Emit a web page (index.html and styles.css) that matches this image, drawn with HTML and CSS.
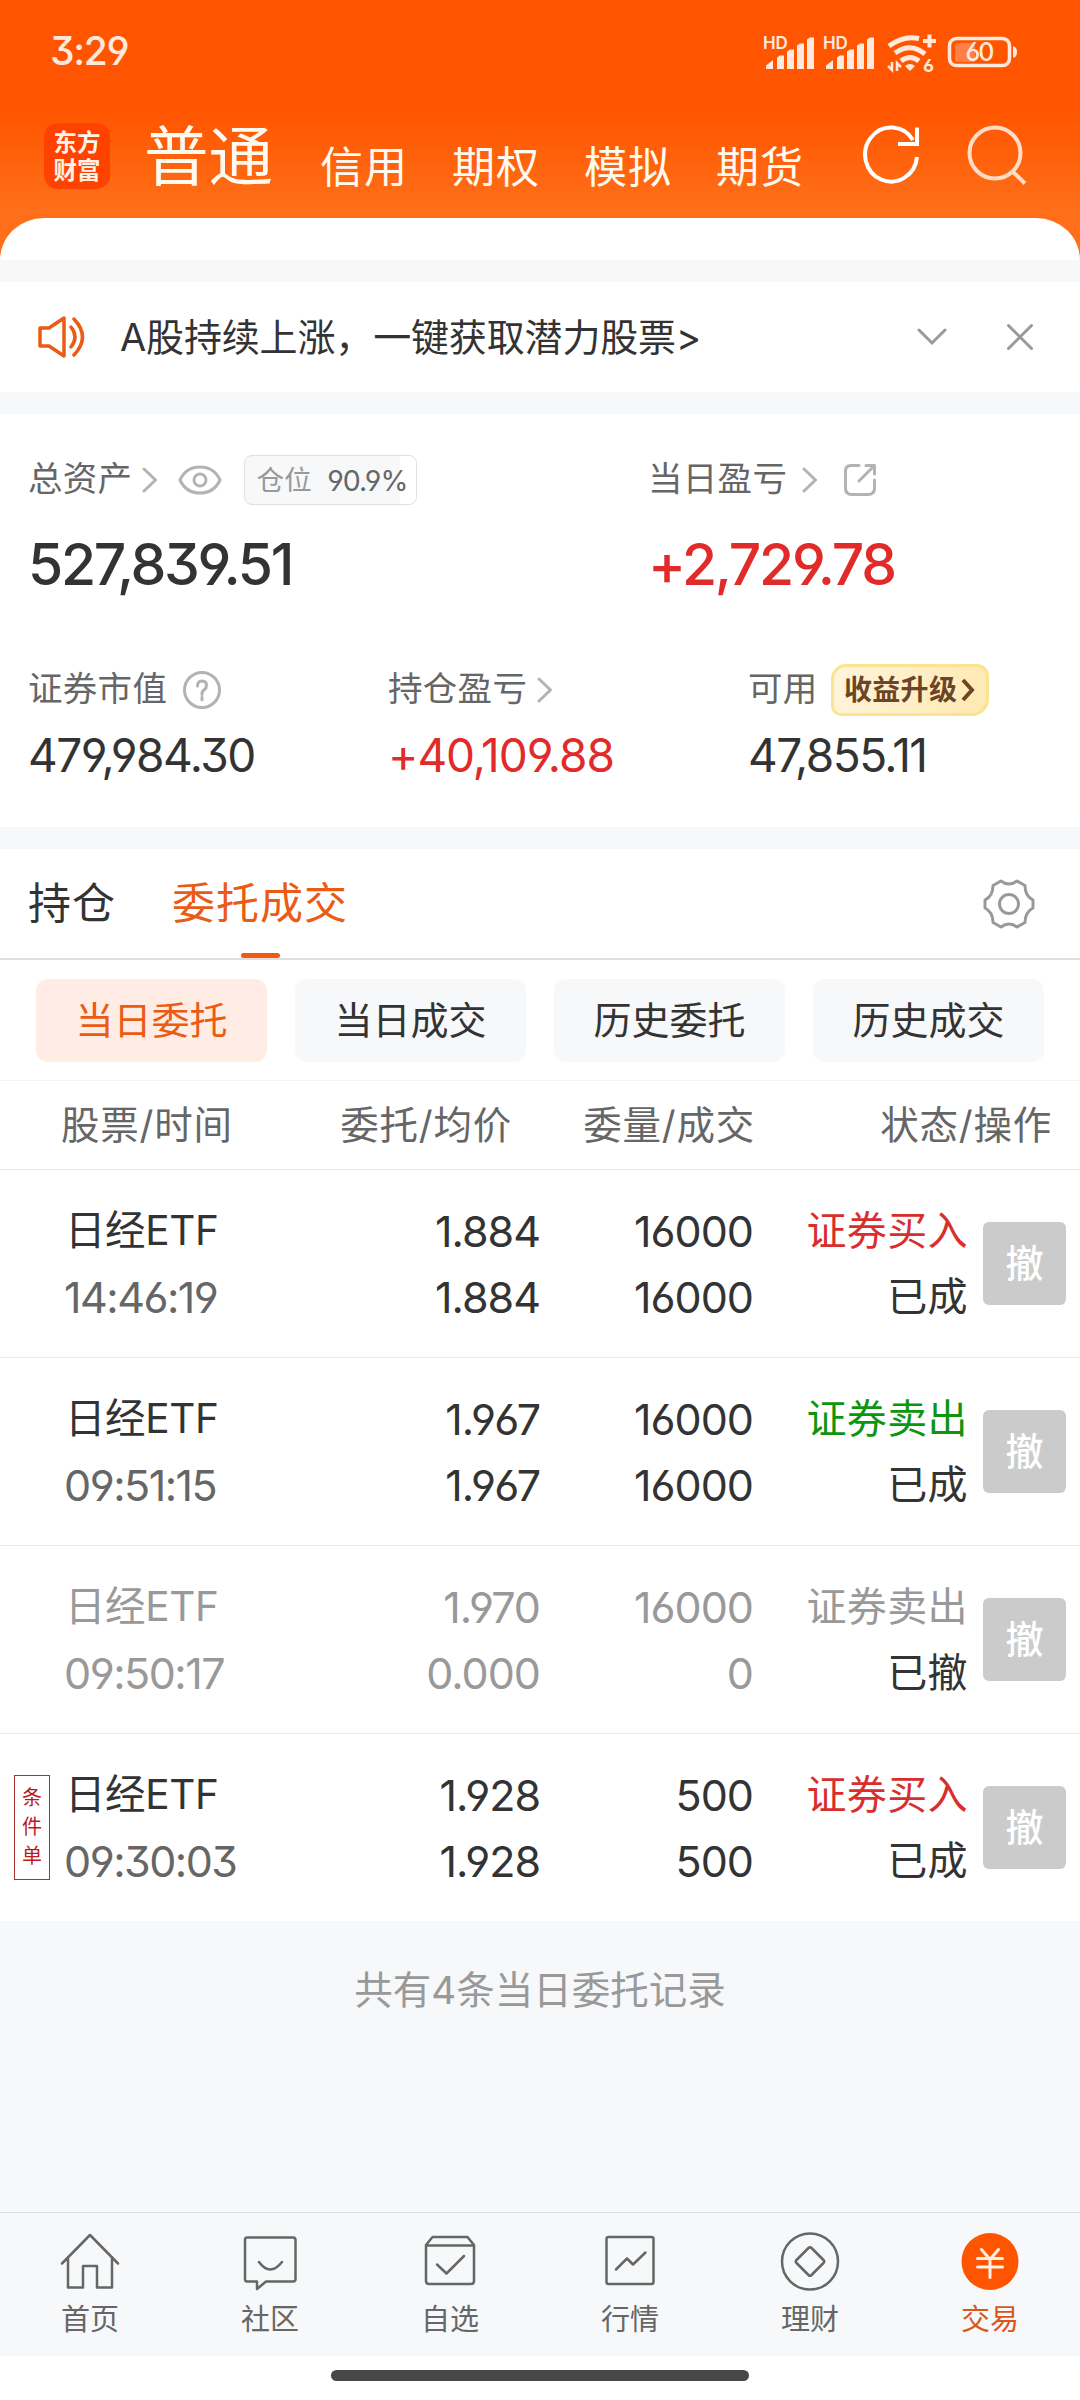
FILE: index.html
```html
<!DOCTYPE html>
<html lang="zh-CN">
<head>
<meta charset="utf-8">
<title>东方财富 交易</title>
<link rel="stylesheet" href="styles.css">
</head>
<body>
<header class="top">
  <div class="status">
    <span class="clock">3:29</span>
    <svg class="status-icons" width="256" height="44" viewBox="762 30 256 44" fill="#ffe9dc">
      <g id="sim">
        <text x="763" y="48.500" class="hd">HD</text>
        <path d="M766 69v-3.500l6.500-5h.5v8.500zM777 69v-11.500l3-2h4v13.500zM787 69v-17.500l3-2h4v19.500zM797 69v-23.500l3-2h4v25.500zM807 69v-29.500l3-2h4v31.500z"/>
      </g>
      <use href="#sim" x="60"/>
      <g fill="none" stroke="#ffe9dc" stroke-width="5">
        <path d="M889 46q15-11 30-7.500"/>
        <path d="M895 53q15.500-11 30 1"/>
        <path d="M901 61q9-7 18 0"/>
        <path d="M923 41h13M929.500 34.500v13" stroke-width="4"/>
        <path d="M892 62v8l-4-4M897 71v-8l4 4" stroke-width="2.500"/>
      </g>
      <path d="M905 66q5-4 10 0l-5 5z"/>
      <text x="923" y="71.500" class="wifi6">6</text>
      <rect x="949.500" y="38.500" width="60" height="27" rx="7" fill="none" stroke="#ffe9dc" stroke-width="3.500"/>
      <path d="M958 43h17v19h-17q-3 0-3-3v-13q0-3 3-3z" fill="#ff8046"/>
      <path d="M1013 46.500q4 0 4 5.500t-4 5.500z"/>
      <text x="965.500" y="60.500" class="batt">60</text>
    </svg>
  </div>
  <nav class="brand">
    <span class="logo">东方<br>财富</span>
    <a class="acct acct-on">普通</a>
    <a class="acct">信用</a>
    <a class="acct">期权</a>
    <a class="acct">模拟</a>
    <a class="acct">期货</a>
    <svg class="refresh" width="60" height="62" viewBox="0 0 60 62" fill="none" stroke="#fff" stroke-width="4">
      <path d="M55 33a26 27 0 1 1-4-17M36 20h19V3.500"/>
    </svg>
    <svg class="search" width="62" height="62" viewBox="0 0 62 62" fill="none" stroke="#ffdcc5" stroke-width="4">
      <circle cx="29" cy="29" r="25.500"/><path d="M46 47l13 12.500"/>
    </svg>
  </nav>
  <div class="sheet"></div>
</header>

<section class="notice">
  <svg width="48" height="44" viewBox="0 0 48 44" fill="none" stroke="#ea5b14" stroke-width="3.500" stroke-linejoin="round" stroke-linecap="round">
    <path d="M3 13h9L27 3v38L12 31H3zM34 12q8 10 0 20M37 4q17 18 0 36"/>
  </svg>
  <span class="notice-text">A股持续上涨，一键获取潜力股票&gt;</span>
  <svg class="fold" width="30" height="18" viewBox="0 0 30 18" fill="none" stroke="#999" stroke-width="3" stroke-linecap="round"><path d="M2 2l13 13L28 2"/></svg>
  <svg width="28" height="28" viewBox="0 0 28 28" fill="none" stroke="#999" stroke-width="3" stroke-linecap="round"><path d="M2.500 2.500l23 23M25.500 2.500l-23 23"/></svg>
</section>

<section class="assets">
  <div class="totals">
    <div class="total">
      <div class="label"><span>总资产</span>
        <svg class="chev" width="16" height="26" viewBox="0 0 16 26"><path d="M2 2l11.500 11L2 24"/></svg>
        <svg class="eye" width="44" height="30" viewBox="0 0 44 30"><path d="M2 15Q8 2 22 2t20 13Q36 28 22 28T2 15z"/><circle cx="22" cy="15" r="6"/></svg>
        <span class="ratio"><i>仓位</i><b>90.9%</b></span>
      </div>
      <div class="num big">527,839.51</div>
    </div>
    <div class="total">
      <div class="label"><span>当日盈亏</span>
        <svg class="chev day" width="16" height="26" viewBox="0 0 16 26"><path d="M2 2l11.500 11L2 24"/></svg>
        <svg class="share" width="34" height="34" viewBox="0 0 34 34"><path d="M16 2.500H8q-5.500 0-5.500 5.500v17q0 6.500 6.500 6.500h16q6.500 0 6.500-6.500v-8M16 18L31 3M23 2.500h8.500V11"/></svg>
      </div>
      <div class="num big up">+2,729.78</div>
    </div>
  </div>
  <div class="details">
    <div>
      <div class="label"><span>证券市值</span>
        <svg class="help" width="40" height="40" viewBox="0 0 40 40"><circle cx="20" cy="20" r="17.500"/><path d="M15.500 16q0-5 4.500-5t4.500 4.500q0 2.500-2.500 4.500t-2 4.500M20 27.200v2.600"/></svg>
      </div>
      <div class="num mid">479,984.30</div>
    </div>
    <div>
      <div class="label"><span>持仓盈亏</span>
        <svg class="chev" width="16" height="26" viewBox="0 0 16 26"><path d="M2 2l11.500 11L2 24"/></svg>
      </div>
      <div class="num mid up wide">+40,109.88</div>
    </div>
    <div>
      <div class="label"><span>可用</span>
        <em class="upgrade">收益升级<svg width="14" height="24" viewBox="0 0 14 24"><path d="M2 2l9 10-9 10"/></svg></em>
      </div>
      <div class="num mid">47,855.11</div>
    </div>
  </div>
</section>

<section class="trade">
  <nav class="tabs">
    <a>持仓</a>
    <a class="on">委托成交</a>
    <svg width="52" height="52" viewBox="0 0 52 52" fill="none" stroke="#999" stroke-width="3" stroke-linejoin="round">
      <path d="M18 3Q26 9 34 3L42 7.500Q42 18 50 22V30Q42 34 42 44.500L34 49Q26 43 18 49L10 44.500Q10 34 2 30V22Q10 18 10 7.500Z"/><circle cx="26" cy="26" r="9.500"/>
    </svg>
  </nav>
  <div class="pills"><a class="on">当日委托</a><a>当日成交</a><a>历史委托</a><a>历史成交</a></div>
  <div class="cols head"><span>股票/时间</span><span>委托/均价</span><span>委量/成交</span><span>状态/操作</span></div>
  <div class="cols row">
    <div><p class="name">日经ETF</p><p class="time">14:46:19</p></div>
    <div><p>1.884</p><p>1.884</p></div>
    <div><p>16000</p><p>16000</p></div>
    <div><p class="buy">证券买入</p><p class="st">已成</p></div>
    <button>撤</button>
  </div>
  <div class="cols row">
    <div><p class="name">日经ETF</p><p class="time">09:51:15</p></div>
    <div><p>1.967</p><p>1.967</p></div>
    <div><p>16000</p><p>16000</p></div>
    <div><p class="sell">证券卖出</p><p class="st">已成</p></div>
    <button>撤</button>
  </div>
  <div class="cols row void">
    <div><p class="name">日经ETF</p><p class="time">09:50:17</p></div>
    <div><p>1.970</p><p>0.000</p></div>
    <div><p>16000</p><p>0</p></div>
    <div><p class="cjk">证券卖出</p><p class="st">已撤</p></div>
    <button>撤</button>
  </div>
  <div class="cols row">
    <span class="cond">条件单</span>
    <div><p class="name">日经ETF</p><p class="time">09:30:03</p></div>
    <div><p>1.928</p><p>1.928</p></div>
    <div><p>500</p><p>500</p></div>
    <div><p class="buy">证券买入</p><p class="st">已成</p></div>
    <button>撤</button>
  </div>
</section>

<p class="summary">共有4条当日委托记录</p>

<nav class="dock">
  <a><svg viewBox="0 0 60 60"><path d="M2 31.500L30 3l28 28.500M8 25v30.500h15V34h14v21.500h15V25"/></svg>首页</a>
  <a><svg viewBox="0 0 60 60"><path d="M7 5.500h46q2.500 0 2.500 2.500v39q0 2.500-2.500 2.500H26L17 57v-7.500H7q-2 0-2-2.500V8q0-2.500 2-2.500zM19 30q11 15 23 0"/></svg>社区</a>
  <a><svg viewBox="0 0 60 60"><path d="M6 13L12.500 5h35L54 13v36q0 3-3 3H9q-3 0-3-3zM6 13.500h48M17 32.500l9.500 9L44 24"/></svg>自选</a>
  <a><svg viewBox="0 0 60 60"><rect x="6.500" y="5" width="47" height="47" rx="2"/><path d="M16 37.500L27 26.500l6 6L45.500 20.500"/></svg>行情</a>
  <a><svg viewBox="0 0 60 60"><circle cx="30" cy="29.500" r="28"/><path d="M28.500 16L16.500 28q-1.500 1.500 0 3l12 12q1.500 1.500 3 0l12-12q1.500-1.500 0-3l-12-12q-1.500-1.500-3 0z"/></svg>理财</a>
  <a class="on"><svg viewBox="0 0 60 60"><circle cx="30" cy="29.500" r="28.500"/><path d="M21.500 17.500L30 27.500l8.500-10M30 27v18.500M17.500 26.500h25M17.500 35h25"/></svg>交易</a>
</nav>
<div class="gesture"><i></i></div>
</body>
</html>
```
FILE: styles.css
```css
* { box-sizing: border-box; margin: 0; padding: 0; }
i, b, em { font-style: normal; font-weight: inherit; }
svg { flex: none; display: block; }

body {
  width: 1080px;
  height: 2400px;
  display: flex;
  flex-direction: column;
  background: #f7f8fa;
  color: #333;
  font-family: Inter, "Noto Sans CJK SC", sans-serif;
  font-feature-settings: "cv03", "cv04", "cv09";
  overflow: hidden;
}

/* header */
.top { height: 260px; background: linear-gradient(#ff5500 110px, #ff6e18 205px); display: flex; flex-direction: column; }
.status { height: 104px; display: flex; justify-content: space-between; padding: 30px 62px 0 50px; }
.clock { font-size: 39px; line-height: 42px; font-weight: 500; color: #ffe9dc; letter-spacing: -1.300px; }
.hd { font-size: 17px; font-weight: 600; letter-spacing: -.3px; }
.wifi6 { font-size: 18px; font-weight: 700; }
.batt { font-size: 25px; font-weight: 500; letter-spacing: -2px; }

.brand { height: 114px; display: flex; color: #fffaf0; padding-left: 44px; }
.logo {
  width: 66px; height: 66px; margin-top: 19px; padding-top: 6px; border-radius: 14px; background: #ff4200;
  font: 700 23.5px/28px "Liberation Sans", "Noto Sans CJK SC", sans-serif; text-align: center; color: #fff3e8;
}
.acct { font-size: 43px; letter-spacing: 1px; line-height: 60px; margin-top: 33px; margin-right: 44px; width: 88px; flex: none; }
.acct-on { font-size: 64.5px; letter-spacing: 0; line-height: 70px; margin-top: 18px; width: 130px; margin-left: 34px; margin-right: 46px; }
.refresh { margin: 20px 0 0 14px; }
.search { margin: 20px 0 0 44px; }
.sheet { height: 42px; background: #fff; border-radius: 44px 44px 0 0 / 42px 42px 0 0; }

/* notice */
.notice { flex: none; height: 110px; margin-top: 22px; padding: 0 46px 0 37px; background: #fff; display: flex; align-items: center; }
.notice-text { font-size: 38px; letter-spacing: -.15px; margin-left: 35px; flex: 1; white-space: nowrap; line-height: 50px; padding-bottom: 1px; }
.fold { margin-right: 59px; }

/* assets */
.assets { flex: none; height: 413px; margin-top: 22px; padding: 40px 28px 0; background: #fff; }
.totals { display: grid; grid-template-columns: 620px 1fr; }
.details { display: grid; grid-template-columns: 360px 360px 1fr; margin-top: 69px; }
.label { height: 52px; display: flex; align-items: center; font-size: 34.5px; letter-spacing: .3px; color: #666; white-space: nowrap; }
.label > span:first-child { line-height: 48px; padding-bottom: 3px; }
.label svg { fill: none; stroke: #b3b3b3; stroke-width: 3; stroke-linecap: round; stroke-linejoin: round; }
.chev { margin-left: 10px; }
.chev.day { margin-left: 15px; }
.eye { margin-left: 20px; }
.share { margin-left: 25px; }
.help { margin-left: 15px; }
.ratio {
  width: 173px; height: 50px; margin-left: 22px; padding-left: 11px; display: flex; align-items: center; justify-content: space-between; padding-right: 9px;
  border: 1px solid #e0e0e2; border-radius: 8px; background: linear-gradient(90deg, #f7f8fa 90.9%, #fff 90.9%);
}
.ratio i { font-size: 27.5px; line-height: 40px; }
.ratio i { color: #999; }
.ratio b { font-size: 28.5px; letter-spacing: -1px; }
.upgrade {
  width: 158px; height: 52px; margin-left: 13px; display: flex; align-items: center; justify-content: center; gap: 4px;
  border: 3px solid #fae48f; border-radius: 15px 12px 17px 10px; background: linear-gradient(110deg, #fff4dc, #ffe9b2);
  color: #6b4526; font-size: 28px; line-height: 40px; font-weight: 700;
}
.label .upgrade svg { stroke: #6b4526; stroke-width: 4; stroke-linecap: butt; stroke-linejoin: miter; }
.num { white-space: nowrap; }
.big { height: 60px; line-height: 60px; margin-top: 29px; font-size: 57px; font-weight: 500; letter-spacing: -2.300px; }
.mid { height: 50px; line-height: 50px; margin-top: 14px; font-size: 46px; letter-spacing: -1.500px; }
.mid.wide { letter-spacing: -1.050px; }
.up { color: #e12b2b; }

/* orders */
.trade { flex: none; height: 1072px; margin-top: 22px; background: #fff; }
.tabs { height: 111px; display: flex; padding: 0 45px 0 28px; font-size: 43px; letter-spacing: 1px; line-height: 109px; border-bottom: 2px solid #e0e0e0; }
.tabs a { margin-right: 56px; display: flex; flex-direction: column; align-items: center; }
.tabs .on { color: #ea5b14; }
.tabs .on::after { content: ""; width: 39px; height: 6px; margin-top: -5px; border-radius: 3px; background: #f25a10; }
.tabs svg { margin: 29px 0 0 auto; }
.pills { height: 121px; padding: 19px 36px 0; display: flex; gap: 28px; border-bottom: 1px solid #f3f3f3; }
.pills a { flex: 1; height: 83px; line-height: 83px; border-radius: 12px; background: #f7f8fa; text-align: center; font-size: 38px; }
.pills .on { background: #ffede5; color: #ea5b14; }

.cols { display: grid; position: relative; }
.head { height: 89px; line-height: 89px; font-size: 38.500px; letter-spacing: .8px; color: #666; border-bottom: 1px solid #e8e8e8; grid-template-columns: 512px 243px 297px; text-align: right; }
.head span:first-child { grid-area: 1 / 1; text-align: left; padding-left: 61px; }
.head span:nth-child(2) { grid-area: 1 / 1; }
.row { height: 188px; padding: 28px 14px 0 64px; border-bottom: 1px solid #ebebeb; font-size: 43px; line-height: 66px; text-align: right; grid-template-columns: 236px 240px 213px 215px 83px; }
.row:last-child { border-bottom: 0; }
.row div:first-of-type { text-align: left; white-space: nowrap; }
.row p { height: 66px; letter-spacing: -1px; }
.row .name { font-size: 40.5px; letter-spacing: -.4px; padding-left: 1px; }
.row .time { color: #666; letter-spacing: -1.500px; }
.row .buy, .row .sell, .row .cjk, .row .st { font-size: 40px; letter-spacing: .4px; }
.row .buy { color: #d92e2e; }
.row .sell { color: #0d960d; }
.row button {
  width: 83px; height: 83px; margin: 24px 0 0 15px; border: 0; border-radius: 6px; background: #cbcbcb;
  color: #fff; font: 500 38px/83px Inter, "Noto Sans CJK SC", sans-serif;
}
.void p { color: #999; }
.void .time { color: #999; }
.void .st { color: #333; }
.cond {
  position: absolute; left: 14px; top: 41px; width: 36px; height: 105px; padding: 8px 7px 0; border: 1.500px solid #a83232;
  font-size: 20px; line-height: 29px; color: #b81c1c; text-align: center; word-break: break-all;
}

.summary { margin-top: 40px; height: 58px; line-height: 58px; text-align: center; font-size: 38.5px; color: #999; }

/* bottom navigation */
.dock { flex: none; height: 144px; margin-top: auto; border-top: 1px solid #e0e0e0; display: grid; grid-template-columns: repeat(6, 180px); }
.dock a { display: flex; flex-direction: column; align-items: center; padding-top: 19px; font-size: 29px; line-height: 56px; color: #666; }
.dock svg { width: 60px; height: 60px; fill: none; stroke: #666; stroke-width: 2.500; stroke-linecap: round; stroke-linejoin: round; }
.dock .on { color: #d9571a; }
.dock .on svg circle { fill: #ff5500; stroke: none; }
.dock .on svg path { stroke: #fff0e4; stroke-width: 3; }
.gesture { flex: none; height: 44px; background: #fff; display: flex; justify-content: center; padding-top: 14px; }
.gesture i { width: 418px; height: 11px; border-radius: 6px; background: #474747; }
```
